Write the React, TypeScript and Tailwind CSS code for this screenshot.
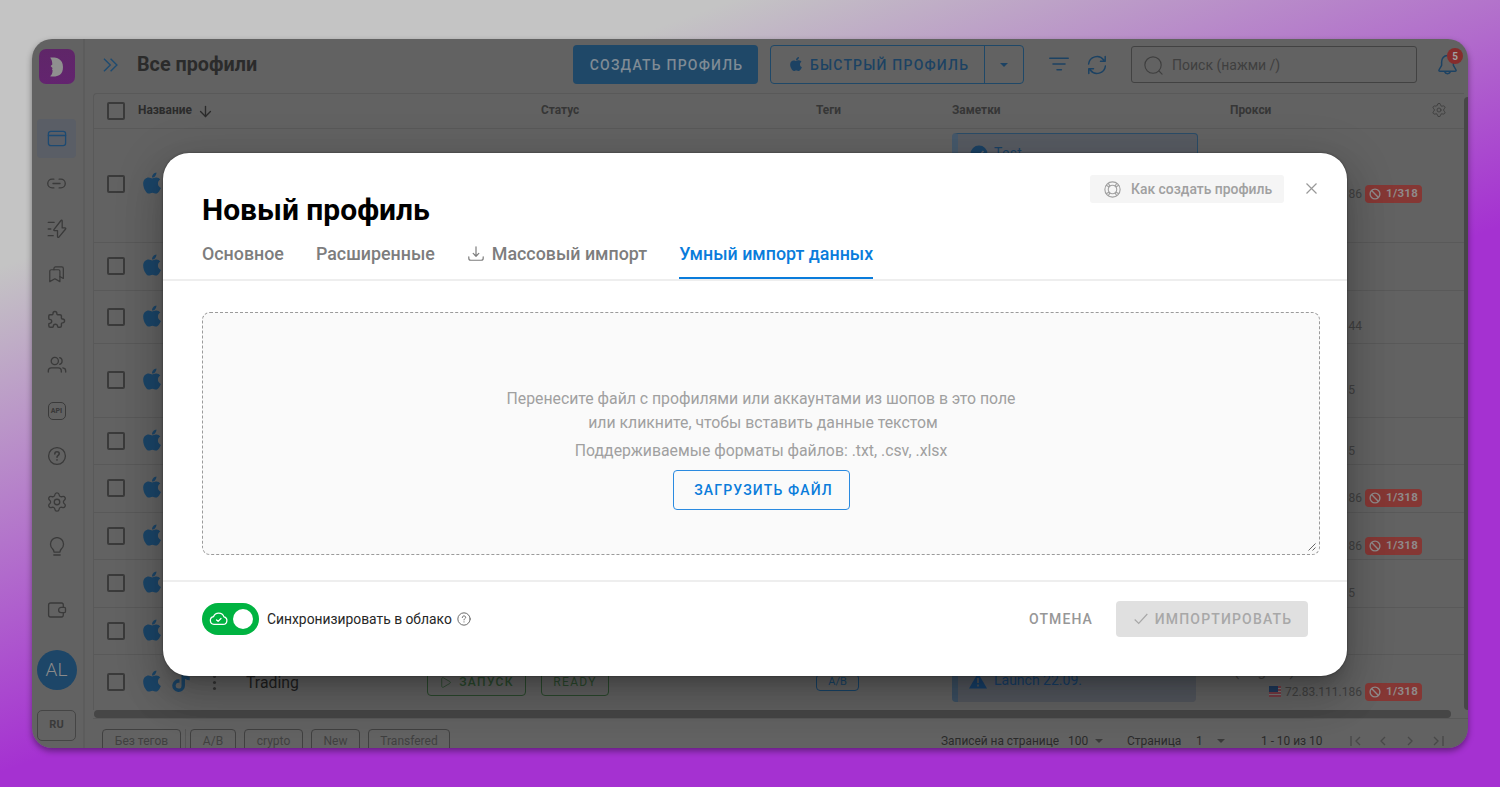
import React from "react";
import { Link2, Settings, ArrowDown, Play } from "lucide-react";
import { FaApple, FaTiktok } from "react-icons/fa6";

type IconProps = { className?: string; children: React.ReactNode; size?: number; sw?: number };

function Ico({ className = "", children, size = 20, sw = 1.3 }: IconProps) {
  return (
    <svg
      className={`shrink-0 ${className}`}
      width={size}
      height={size}
      viewBox="0 0 20 20"
      fill="none"
      stroke="currentColor"
      strokeWidth={sw}
      strokeLinecap="round"
      strokeLinejoin="round"
    >
      {children}
    </svg>
  );
}

const Caret = ({ className = "" }: { className?: string }) => (
  <svg className={`shrink-0 ${className}`} width="8" height="4" viewBox="0 0 8 4" fill="currentColor">
    <path d="M0 0h8L4 4z" />
  </svg>
);

const navIcons: React.ReactNode[] = [
  <Link2 size={21} strokeWidth={1.5} />,
  <Ico>
    <path d="M1.2 3.3h6M1.2 10h2.6M1.2 16.7h5" />
    <path d="M14 1.500 6.900 10.600c-.4.5-.1 1.100.5 1.100h3.100v5.900c0 .8.9 1.100 1.400.5l6.700-8.100c.4-.5.100-1.100-.5-1.100h-2.900V2c0-.9-.8-1.100-1.200-.5Z" />
  </Ico>,
  <Ico size={19}>
    <path d="M7.300 5V3.600c0-.9.700-1.600 1.600-1.600h6.700c.9 0 1.600.7 1.600 1.600v10.600l-3.600-2" />
    <path d="M4.500 5h7.500c.9 0 1.600.7 1.600 1.600V17.500l-5.300-3-5.400 3V6.600C2.900 5.700 3.600 5 4.500 5Z" />
  </Ico>,
  <svg className="-mt-[2px]" width="21" height="21" viewBox="0 0 24 24" fill="none" stroke="currentColor" strokeWidth="1.6" strokeLinejoin="round">
    <path d="M4.500 6.500H7a1 1 0 0 0 1-1V5a2.200 2.200 0 0 1 4.400 0v.5a1 1 0 0 0 1 1H16a1.600 1.600 0 0 1 1.600 1.600v2.300a1 1 0 0 0 1 1h.4a2.200 2.200 0 0 1 0 4.400h-.4a1 1 0 0 0-1 1V19a1.800 1.800 0 0 1-1.800 1.800h-1.600a1 1 0 0 1-1-1 2.400 2.400 0 0 0-4.800 0 1 1 0 0 1-1 1H5A1.800 1.800 0 0 1 3.200 19v-1.600a1 1 0 0 1 1-1 2.300 2.300 0 0 0 0-4.600 1 1 0 0 1-1-1V8a1.500 1.500 0 0 1 1.300-1.500Z" />
  </svg>,
  <Ico>
    <circle cx="7.800" cy="6" r="3.600" />
    <path d="M12.700 2.600a3.600 3.600 0 0 1 0 6.800M1.300 17v-1.200c0-1.700 1.300-3 3-3h7c1.700 0 3 1.300 3 3V17M15.800 12.900c1.700.2 2.900 1.400 2.900 3V17" />
  </Ico>,
  <span className="flex h-[18px] w-[18px] items-center justify-center rounded-[5px] border-[1.5px] border-[#3a3a3a] pt-px text-[7px] font-black leading-none">
    API
  </span>,
  <Ico>
    <circle cx="10" cy="10" r="8.400" />
    <path strokeWidth="1.6" d="M7.800 7.900c0-1.400 1-2.200 2.200-2.200s2.200.8 2.200 2c0 1.600-2.200 1.700-2.200 3.500M10 13.900v.2" />
  </Ico>,
  <Settings size={22} strokeWidth={1.4} />,
  <Ico>
    <path d="M7 15.100c0-1.600-.6-2.300-1.500-3.300a6.500 6.500 0 1 1 9 0c-.9 1-1.500 1.700-1.500 3.300ZM6.800 18h6.400" />
  </Ico>,
];

const Check = () => <span className="h-[18px] w-[18px] shrink-0 rounded-[2px] border-2 border-[#3a3a3a]" />;

const LimitBadge = () => (
  <span className="ml-[3px] flex h-[18px] w-[57px] items-center rounded-[4px] bg-[#853734] pl-1 text-[11.5px] font-bold tracking-[0.3px] text-[#8f8a8a]">
    <svg className="mr-[5px]" width="12" height="12" viewBox="0 0 12 12" fill="none" stroke="currentColor" strokeWidth="1.4">
      <circle cx="6" cy="6" r="4.900" />
      <path d="m2.600 2.600 6.800 6.800" />
    </svg>
    <span className="pt-px">1/318</span>
  </span>
);

type Row = { h: string; ip?: string; limit?: boolean; note?: "test" | "launch"; full?: boolean };

const rows: Row[] = [
  { h: "h-[114px] pb-[3px]", ip: "72.83.111.186", limit: true, note: "test" },
  { h: "h-[48px] pb-[1px]" },
  { h: "h-[53px] pb-[1px]", ip: "31.12.80.144" },
  { h: "h-[74px] pb-[1px]", ip: "45.90.61.15" },
  { h: "h-[47px]", ip: "45.90.61.15" },
  { h: "h-[48px] pb-[1px]", ip: "72.83.111.186", limit: true },
  { h: "h-[47px]", ip: "72.83.111.186", limit: true },
  { h: "h-[48px] pb-[1px]", ip: "45.90.61.15" },
  { h: "h-[47px] pb-[1px]" },
  { h: "h-[55px] pb-[1px]", ip: "72.83.111.186", limit: true, note: "launch", full: true },
];

const cols = "grid grid-cols-[333px_114px_275px_136px_278px_1fr]";

function TableRow({ r }: { r: Row }) {
  return (
    <div className={`${cols} ${r.h} border-[#595959] ${r.full ? "" : "border-b"}`}>
      <div className="flex items-center pl-[13px]">
        <Check />
        <FaApple className="-mt-[2px] ml-[15px] text-[#1b4568]" size={24} />
        {r.full && (
          <>
            <FaTiktok className="ml-[7px] text-[#1b4568]" size={20} />
            <span className="ml-[22px] flex flex-col gap-[3px]">
              <i className="h-[3px] w-[3px] rounded-full bg-[#363636]" />
              <i className="h-[3px] w-[3px] rounded-full bg-[#363636]" />
              <i className="h-[3px] w-[3px] rounded-full bg-[#363636]" />
            </span>
            <span className="ml-[30px] pt-px text-[15.8px] leading-[18px] text-[#1f1f1f]">Trading</span>
          </>
        )}
      </div>
      <div className="flex items-center">
        {r.full && (
          <span className="flex h-[28px] w-[99px] items-center justify-center gap-[7px] rounded-[4px] border border-[#2b4a2d] text-[12px] font-medium tracking-[1.3px] text-[#2b4a2d]">
            <Play size={13} strokeWidth={1.5} />
            ЗАПУСК
          </span>
        )}
      </div>
      <div className="flex items-center">
        {r.full && (
          <span className="flex h-[28px] w-[68px] items-center justify-center rounded-[4px] border border-[#2b4a2d] text-[12px] tracking-[1.3px] text-[#2b4a2d]">
            READY
          </span>
        )}
      </div>
      <div className="flex items-center">
        {r.full && (
          <span className="flex h-[17px] w-[43px] items-center justify-center rounded-[4px] border border-[#194569] pt-px text-[11px] text-[#194569]">
            A/B
          </span>
        )}
      </div>
      <div>
        {r.note === "test" && (
          <div className="mt-[4px] flex h-[96px] w-[246px] rounded-[4px] border border-[#2a4c68] border-l-[6px] border-l-[#46596b] bg-[#575b62] pl-[12px] pt-[9px] text-[#1b4163]">
            <svg width="18" height="18" viewBox="0 0 18 18">
              <circle cx="9" cy="11" r="8.500" fill="currentColor" />
              <path d="m5 11 3 3 5.500-6" stroke="#5b6068" strokeWidth="1.8" fill="none" />
            </svg>
            <span className="ml-[6px] text-[14px] leading-[21px] tracking-[0.3px]">Test</span>
          </div>
        )}
        {r.note === "launch" && (
          <div className="mt-[4px] flex h-[43px] w-[244px] rounded-[4px] border-l-[6px] border-[#3c5063] bg-[#53575e] pl-[11px] pt-[13px] text-[#17406a]">
            <svg width="18" height="17" viewBox="0 0 18 17">
              <path d="M9 1 18 16.500H0Z" fill="currentColor" />
              <path d="M9 6v5M9 12.500v2" stroke="#50545a" strokeWidth="1.8" />
            </svg>
            <span className="ml-[7px] text-[14px] leading-[17px]">Launch 22.09.</span>
          </div>
        )}
      </div>
      <div className="flex flex-col justify-center text-[12px] text-[#404040]">
        {r.ip && (
          <>
            <div className="h-[19px] pl-[4px] text-[15px] leading-[15px]">(Virginia)</div>
            <div className="flex h-[18px] items-center">
              <span className="flex w-[132px] items-center justify-end gap-[4px]">
                <svg width="12" height="11" viewBox="0 0 12 11">
                  <path d="M0 0h12v11H0z" fill="#777" />
                  <path d="M0 1h12M0 4h12M0 7h12M0 10h12" stroke="#7a2a35" strokeWidth="1.6" />
                  <path d="M0 0h9v6H0z" fill="#1f3a5c" />
                </svg>
                <span className={r.ip.endsWith(".15") ? "mr-[7px]" : ""}>{r.ip}</span>
              </span>
              {r.limit && <LimitBadge />}
            </div>
          </>
        )}
      </div>
    </div>
  );
}

function Sidebar() {
  return (
    <aside className="flex w-[53px] shrink-0 flex-col items-center border-r-2 border-[#5c5c5c] pr-[2px] pt-[10px] text-[#3a3a3a]">
      <div className="flex h-[35px] w-[36px] items-center justify-center rounded-[7px] bg-gradient-to-b from-[#5f2668] to-[#63246f]">
        <svg width="15" height="20" viewBox="0 0 15 20" fill="#8f8f8f">
          <path d="M1 .8C2.500.4 14 -.800 14 10S5 19.600 1 19.200c1.800-1 2.400-3 2.600-5.700l-.7-1.500.8-.8L1.600 9l1.700-1.500C3.200 4 2.500 2 1 .8Z" />
        </svg>
      </div>
      <div className="mt-[35px] flex h-[39px] w-[39px] items-center justify-center rounded-[4px] bg-[#5a5e66] text-[#1d4a72]">
        <Ico>
          <rect x="1.400" y="2.300" width="17.200" height="14.400" rx="2.400" />
          <path d="M1.400 6.500h17.200" />
        </Ico>
      </div>
      <div className="mt-[3px] flex flex-col items-center">
        {navIcons.map((n, i) => (
          <div key={i} className="flex h-[45.45px] w-[39px] items-center justify-center">
            {n}
          </div>
        ))}
      </div>
      <div className="mt-[18px] flex h-[45px] items-center">
        <Ico>
          <path d="M16.300 6.900V4.900c0-1.100-.8-1.900-1.900-1.900H3.500c-1.100 0-1.900.8-1.900 1.900v10.200c0 1.100.8 1.900 1.900 1.900h10.900c1.100 0 1.900-.8 1.900-1.900v-1.900" />
          <path d="M14.200 7.400h3.300c.6 0 1 .4 1 1v3.200c0 .6-.4 1-1 1h-3.300a2.600 2.600 0 0 1 0-5.200Z" />
        </Ico>
      </div>
      <div className="mt-[17px] flex h-[40px] w-[40px] items-center justify-center rounded-full bg-[#1d4668] text-[19px] font-light text-[#8a8a8a]">
        AL
      </div>
      <div className="mt-[20px] flex h-[31px] w-[39px] items-center justify-center rounded-[5px] border border-[#454545] text-[11px] font-bold">
        RU
      </div>
    </aside>
  );
}

function Toolbar() {
  return (
    <header className="flex h-[51px] shrink-0 items-center">
      <svg className="ml-[18px] text-[#1f4b70]" width="15" height="14" viewBox="0 0 15 14" fill="none" stroke="currentColor" strokeWidth="1.4">
        <path d="m1 .7 6.300 6.300L1 13.300M7.600.7l6.300 6.300-6.300 6.300" />
      </svg>
      <h1 className="ml-[19px] w-[436px] text-[19.8px] font-bold text-[#2b2b2b]">Все профили</h1>
      <div className="flex h-[39px] w-[185px] items-center justify-center rounded-[4px] bg-[#1f4868] pl-[2px] pt-[1px] text-[14px] font-medium tracking-[1.2px] text-[#7f8b95]">
        СОЗДАТЬ ПРОФИЛЬ
      </div>
      <div className="ml-[12px] flex h-[39px] w-[254px] items-center rounded-[4px] border border-[#1f4868] text-[#1c4263]">
        <span className="flex h-full w-[214px] items-center justify-center gap-[6px] border-r border-[#1f4868] pl-[2px] pt-[1px] text-[14px] font-medium tracking-[1.2px]">
          <FaApple size={16} className="-mt-[2px]" />
          БЫСТРЫЙ ПРОФИЛЬ
        </span>
        <span className="flex flex-1 justify-center pt-[1px]">
          <Caret />
        </span>
      </div>
      <Ico className="-mt-[2px] ml-[25px] text-[#1c4263]" sw={1.5}>
        <path d="M.8 4.200h18.400M4 10h12M8 15.800h4.400" />
      </Ico>
      <Ico className="ml-[18px] text-[#1c4263]" sw={1.5}>
        <path d="M1.600 9A8.400 8.400 0 0 1 16.700 5M18.400 11A8.400 8.400 0 0 1 3.300 15M18.200 1.500v4.700h-4.700M1.800 18.500v-4.700h4.700" />
      </Ico>
      <div className="ml-[24px] flex h-[37px] w-[286px] items-center rounded-[3px] border border-[#424242] pl-[12px] pt-[1px] text-[14px] text-[#3f3f3f]">
        <Ico size={19} sw={1.2}>
          <circle cx="9.500" cy="9.500" r="8.600" />
          <path d="m15.800 15.800 3.200 3.200" />
        </Ico>
        <span className="ml-[9px]">Поиск (нажми /)</span>
      </div>
      <div className="relative ml-[20px] text-[#1c4263]">
        <Ico size={21} sw={1.4}>
          <path d="M10 1.500c-3.600 0-5.600 2.800-5.600 6v3.300L2 15c-.5.900 0 1.500.9 1.500h14.200c.9 0 1.400-.6.9-1.500l-2.400-4.200V7.500c0-3.200-2-6-5.600-6ZM7.300 17c.4 1.200 1.400 1.800 2.700 1.800s2.300-.6 2.700-1.800" />
        </Ico>
        <span className="absolute -top-[6px] left-[10px] flex h-[16px] w-[16px] items-center justify-center rounded-full bg-[#862c2c] text-[10px] font-bold text-[#a0a0a0]">
          5
        </span>
      </div>
    </header>
  );
}

const Chip = ({ w, children }: { w: string; children: string }) => (
  <span className={`${w} flex h-[24px] shrink-0 items-center justify-center rounded-[4px] border border-[#404040] text-[12px] text-[#404040]`}>
    {children}
  </span>
);

function Footer() {
  return (
    <footer className="flex h-[36px] shrink-0 items-start pl-[9px] text-[12px] text-[#2a2a2a]">
      <div className="flex w-[839px] gap-[8px] pt-[10px]">
        <div className="flex gap-[4px]">
          <Chip w="w-[79px]">Без тегов</Chip>
          <span className="h-[24px] w-px bg-[#555]" />
          <Chip w="w-[46px]">A/B</Chip>
        </div>
        <Chip w="w-[59px]">crypto</Chip>
        <Chip w="w-[49px]">New</Chip>
        <Chip w="w-[82px]">Transfered</Chip>
      </div>
      <div className="flex items-center pt-[13px] leading-[18px]">
        <span className="w-[127px] text-[11.9px]">Записей на странице</span>
        <span className="w-[27px]">100</span>
        <Caret className="text-[#3a3a3a]" />
        <span className="ml-[24px] w-[69px]">Страница</span>
        <span className="w-[21px]">1</span>
        <Caret className="text-[#3a3a3a]" />
        <span className="ml-[36px] w-[89px] text-[11.9px]">1 - 10 из 10</span>
        <svg className="text-[#484848]" width="94" height="10" viewBox="0 0 94 10" fill="none" stroke="currentColor" strokeWidth="1.3">
          <path d="M1 0v10M10 1 6 5l4 4M35 1l-4 4 4 4M58 1l4 4-4 4M84 1l4 4-4 4M93 0v10" />
        </svg>
      </div>
    </footer>
  );
}

function Dialog() {
  return (
    <section
      role="dialog"
      className="absolute left-[131px] top-[114px] flex h-[523px] w-[1184px] flex-col rounded-[26px] bg-white shadow-[0_11px_15px_-7px_rgba(0,0,0,0.2),0_24px_38px_3px_rgba(0,0,0,0.14),0_9px_46px_8px_rgba(0,0,0,0.12),0_0_2px_rgba(0,0,0,0.5)]"
    >
      <div className="flex justify-between pl-[39px] pr-[30px]">
        <h2 className="mt-[39px] text-[30px] font-bold leading-[36px] text-black">Новый профиль</h2>
        <div className="mt-[22px] flex h-[28px] items-center">
          <button className="flex h-[28px] w-[194px] items-center rounded-[3px] bg-[#f5f5f5] pl-[14px] text-[13.9px] font-medium text-[#a0a0a0]">
            <Ico size={17} sw={1.3} className="mr-[10px]">
              <circle cx="10" cy="10" r="9" />
              <circle cx="10" cy="10" r="5" />
              <path d="M5 2.700 7 6M2.700 5 6 7M15 2.700 13 6M17.300 5 14 7M5 17.300 7 14M2.700 15 6 13M15 17.300 13 14M17.300 15 14 13" />
            </Ico>
            Как создать профиль
          </button>
          <svg className="-mt-[1px] ml-[22px]" width="11" height="11" viewBox="0 0 11 11" stroke="#999" strokeWidth="1.2">
            <path d="m.5.500 10 10M10.500.500l-10 10" />
          </svg>
        </div>
      </div>
      <nav className="flex h-[53px] shrink-0 items-start gap-[32px] border-b-2 border-[#eeeeee] pl-[39px] text-[17.85px] font-medium leading-[52px] text-[#7d7d7d]">
        <span>Основное</span>
        <span>Расширенные</span>
        <span className="flex items-center">
          <Ico size={16} sw={1.5} className="ml-[1px] mr-[8px]">
            <path d="M10 1v11.500M6.500 9.300l3.500 3.500 3.500-3.500M1 13.500v1.800c0 1.500 1 2.500 2.500 2.500h13c1.500 0 2.500-1 2.500-2.500v-1.800" />
          </Ico>
          Массовый импорт
        </span>
        <span className="h-[51px] border-b-2 border-[#0a7cdb] text-[#0a7cdb]">Умный импорт данных</span>
      </nav>
      <div className="relative ml-[39px] mt-[31px] flex h-[243px] w-[1118px] shrink-0 flex-col items-center rounded-[8px] border border-dashed border-[#9a9a9a] bg-[#fafafa] pt-[74px] text-center text-[15.8px] leading-[24px] text-[#a0a0a0]">
        <p>Перенесите файл с профилями или аккаунтами из шопов в это поле</p>
        <p className="pl-[4px]">или кликните, чтобы вставить данные текстом</p>
        <p className="mt-[4px]">Поддерживаемые форматы файлов: .txt, .csv, .xlsx</p>
        <button className="mt-[7px] flex h-[40px] w-[177px] items-center justify-center rounded-[4px] border border-[#2a8ae0] pb-[1px] pl-[5px] text-[14px] font-medium tracking-[1.15px] text-[#0a7cdb]">
          ЗАГРУЗИТЬ ФАЙЛ
        </button>
        <svg className="absolute bottom-[3px] right-[3px]" width="8" height="8" viewBox="0 0 8 8" stroke="#666" strokeWidth="1">
          <path d="M.5 7.500l7-7M4.500 7.500l3-3" />
        </svg>
      </div>
      <div className="mt-[25px] flex h-[76px] shrink-0 items-center border-t-2 border-[#eeeeee] pb-[1px] pl-[39px] pr-[39px]">
        <div className="flex h-[32px] w-[57px] items-center justify-between rounded-full bg-[#00b341] pl-[7px] pr-[6px]">
          <Ico size={19} sw={1.35} className="text-white">
            <path d="M5.200 16.200h9.700a4 4 0 0 0 .8-7.900A5.900 5.900 0 0 0 4.700 8.100a4.100 4.100 0 0 0 .5 8.100Z" />
            <path d="m8 11.500 1.600 1.500 3-3" />
          </Ico>
          <span className="h-[20px] w-[20px] rounded-full bg-white" />
        </div>
        <span className="ml-[8px] pt-[1px] text-[13.85px] text-[#262626]">Синхронизировать в облако</span>
        <Ico size={14} sw={1.4} className="ml-[5px] text-[#666]">
          <circle cx="10" cy="10" r="8.800" />
          <path d="M7.600 7.900c0-1.400 1-2.300 2.400-2.300s2.400.9 2.400 2.100c0 1.600-2.400 1.700-2.400 3.600M10 14v.3" />
        </Ico>
        <button className="ml-auto pt-[2px] text-[14px] font-medium tracking-[1.1px] text-[#979797]">ОТМЕНА</button>
        <button className="ml-[23px] flex h-[36px] w-[192px] items-center justify-center rounded-[4px] bg-[#e0e0e0] pl-[2px] pt-[1px] text-[14px] font-medium tracking-[1.17px] text-[#a8a8a8]">
          <svg className="mr-[7px]" width="14" height="12" viewBox="0 0 14 12" fill="none" stroke="currentColor" strokeWidth="1.2">
            <path d="m.7 6.500 4 4L13.300 1" />
          </svg>
          ИМПОРТИРОВАТЬ
        </button>
      </div>
    </section>
  );
}

export default function App() {
  return (
    <div className="h-[787px] w-[1500px] overflow-hidden bg-[linear-gradient(160deg,#c4c4c4_20%,#a531d1_58%)] pl-[32px] pt-[39px] font-['Roboto',sans-serif]">
      <div className="h-[709px] w-[1436px] rounded-[20px] shadow-[0_3px_6px_rgba(0,0,0,0.4)]">
        <div className="relative flex h-[709px] w-[1436px] overflow-hidden rounded-[20px] bg-[#626262]">
          <Sidebar />
          <div className="flex min-w-0 flex-1 flex-col">
            <Toolbar />
            <div className="ml-[8px] mt-[3px] flex min-h-0 flex-1 flex-col">
              <div className="flex">
                <div className="w-[1371px] shrink-0 rounded-tl-[4px] border-l border-t border-[#595959]">
                  <div className={`${cols} h-[35px] items-center border-b border-[#595959] text-[11.9px] font-bold text-[#363636]`}>
                    <div className="flex items-center pl-[13px]">
                      <Check />
                      <span className="ml-[13px] text-[#2b2b2b]">Название</span>
                      <ArrowDown className="ml-[5px] text-[#2b2b2b]" size={17} strokeWidth={1.9} />
                    </div>
                    <span />
                    <span>Статус</span>
                    <span>Теги</span>
                    <span>Заметки</span>
                    <span className="flex items-center justify-between pr-[17px]">
                      Прокси
                      <Settings className="-mt-[2px] text-[#404040]" size={16} strokeWidth={1.4} />
                    </span>
                  </div>
                  {rows.map((r, i) => (
                    <TableRow key={i} r={r} />
                  ))}
                </div>
                <div className="mt-[4px] w-[4px] shrink-0 rounded-bl-[4px] rounded-tl-[4px] bg-[#474747]" />
              </div>
              <div className="ml-[1px] h-[8px] w-[1357px] shrink-0 rounded-full bg-[#464646]" />
              <div className="border-t border-[#595959]" />
              <Footer />
            </div>
          </div>
          <Dialog />
        </div>
      </div>
    </div>
  );
}
